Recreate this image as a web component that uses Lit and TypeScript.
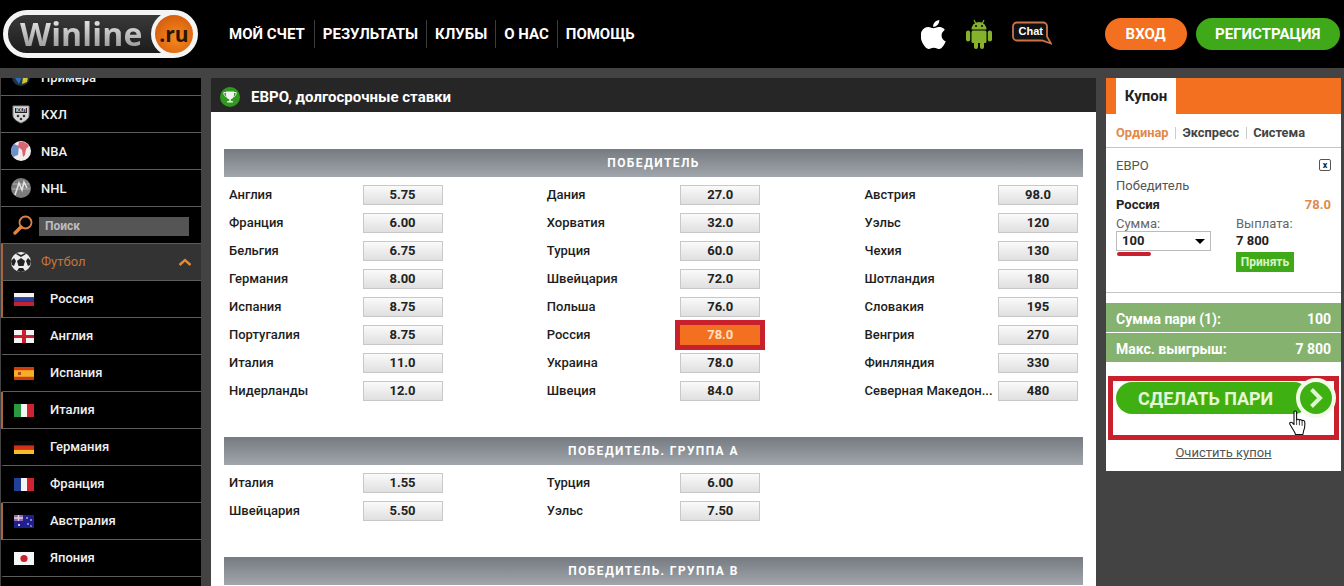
import { LitElement, html, css, svg } from "lit";
import { customElement } from "lit/decorators.js";

const flag: Record<string, any> = {
  ru: svg`<rect width="20" height="4.4" fill="#f4f4f4"/><rect y="4.4" width="20" height="4.3" fill="#2b3c9a"/><rect y="8.7" width="20" height="4.3" fill="#c4222e"/>`,
  en: svg`<rect width="20" height="13" fill="#f4f4f4"/><rect x="8" width="4" height="13" fill="#c8202e"/><rect y="5" width="20" height="3" fill="#c8202e"/>`,
  es: svg`<rect width="20" height="13" fill="#cf3a12"/><rect y="3.2" width="20" height="6.6" fill="#f3b022"/><rect x="4" y="5" width="3" height="3" fill="#b8431a"/>`,
  it: svg`<rect width="7" height="13" fill="#2a9a41"/><rect x="7" width="6" height="13" fill="#f4f4f4"/><rect x="13" width="7" height="13" fill="#d1232f"/>`,
  de: svg`<rect width="20" height="4.4" fill="#0a0a0a"/><rect y="4.4" width="20" height="4.3" fill="#d4301c"/><rect y="8.7" width="20" height="4.3" fill="#f3bd2a"/>`,
  fr: svg`<rect width="7" height="13" fill="#21409a"/><rect x="7" width="6" height="13" fill="#f4f4f4"/><rect x="13" width="7" height="13" fill="#d1232f"/>`,
  au: svg`<rect width="20" height="13" fill="#1f1f8f"/><rect width="9" height="6" fill="#8a6bb0"/><path d="M0 3h9M4.500 0v6" stroke="#e8d0e0" stroke-width="1.400"/><circle cx="5" cy="10" r="1" fill="#fff"/><circle cx="13" cy="3" r=".8" fill="#fff"/><circle cx="17" cy="5" r=".8" fill="#fff"/><circle cx="14" cy="9" r=".8" fill="#fff"/><circle cx="17" cy="11" r=".7" fill="#fff"/>`,
  jp: svg`<rect width="20" height="13" fill="#f6f6f6"/><circle cx="10" cy="6.500" r="3.600" fill="#c8202e"/>`,
};

const sub = [
  ["ru", "Россия", true], ["en", "Англия", false], ["es", "Испания", false], ["it", "Италия", true],
  ["de", "Германия", false], ["fr", "Франция", false], ["au", "Австралия", true], ["jp", "Япония", false],
] as [string, string, boolean][];

const winners: [string, string][] = [
  ["Англия","5.75"],["Дания","27.0"],["Австрия","98.0"],
  ["Франция","6.00"],["Хорватия","32.0"],["Уэльс","120"],
  ["Бельгия","6.75"],["Турция","60.0"],["Чехия","130"],
  ["Германия","8.00"],["Швейцария","72.0"],["Шотландия","180"],
  ["Испания","8.75"],["Польша","76.0"],["Словакия","195"],
  ["Португалия","8.75"],["Россия","78.0"],["Венгрия","270"],
  ["Италия","11.0"],["Украина","78.0"],["Финляндия","330"],
  ["Нидерланды","12.0"],["Швеция","84.0"],["Северная Македон...","480"],
];
const groupA: [string, string][] = [
  ["Италия","1.55"],["Турция","6.00"],["",""],
  ["Швейцария","5.50"],["Уэльс","7.50"],["",""],
];
const groupB: [string, string][] = [];

@customElement("app-root")
export class AppRoot extends LitElement {
  static styles = css`
    :host { display: block; width: 1344px; height: 586px; overflow: hidden; background: #434343; font-family: Roboto, "Liberation Sans", sans-serif; position: relative; }
    .top { height: 68px; background: #000; display: flex; align-items: center; }
    .logo { margin-left: 3px; width: 195px; height: 48px; flex: none; box-sizing: border-box; border: 5px solid #f4f4f4; border-radius: 24px; background: linear-gradient(#3a3a3a, #1c1c1c); position: relative; display: flex; align-items: center; padding-left: 12px; }
    .logo b { font: 700 32px/38px "Open Sans", sans-serif; letter-spacing: .2px; background: linear-gradient(#f2f2f2, #8d8d8d); -webkit-background-clip: text; background-clip: text; color: transparent; }
    .ball { position: absolute; right: -4px; top: -4px; width: 46px; height: 46px; box-sizing: border-box; border-radius: 50%; border: 4px solid #f4f4f4; background: radial-gradient(circle at 55% 60%, #f58a1f, #d9610f 70%, #a84a0a); display: flex; align-items: center; justify-content: center; font: 700 21px "Open Sans", sans-serif; color: #2a1505; }
    nav { margin-left: 31px; display: flex; align-items: center; color: #fff; font-size: 15px; font-weight: 700; height: 28px; }
    nav span { padding: 0 8px; line-height: 28px; border-left: 1px solid #3c3c3c; white-space: nowrap; }
    nav span:first-child { border-left: 0; padding-left: 0; padding-right: 9px; }
    .icons { margin-left: 278px; display: flex; align-items: center; }
    .apple { width: 25px; height: 29px; display: block; }
    .android { width: 26px; height: 30px; display: block; margin-left: 20px; }
    .chat { margin-left: 20px; width: 40px; height: 24px; position: relative; margin-top: -2px; }
    .chat svg { display: block; }
    .chat i { position: absolute; left: 4px; top: 3px; width: 30px; text-align: center; font: 700 11px/15px "Liberation Sans", sans-serif; color: #fff; }
    .pill { height: 32px; border-radius: 16px; color: #fff; font-weight: 700; font-size: 15px; line-height: 32px; text-align: center; }
    .enter { margin-left: 53px; width: 82px; background: #f37021; }
    .reg { margin-left: 9px; width: 144px; background: #3fa91a; }

    .body { display: flex; padding: 10px 0 0 1px; gap: 10px; align-items: flex-start; }
    .side { width: 200px; height: 508px; overflow: hidden; background: #000; flex: none; }
    .list { margin-top: -19px; }
    .row { height: 36px; border-bottom: 1px solid #5c5c5c; display: flex; align-items: center; color: #f0f0f0; font-size: 13px; font-weight: 500; box-sizing: content-box; }
    .row svg.ic { margin-left: 10px; width: 20px; height: 20px; flex: none; }
    .row .t { margin-left: 10px; }
    .row.subr { border-left: 2px solid transparent; }
    .row.subr.mark { border-left-color: #a9653e; }
    .row.subr svg { margin-left: 11px; width: 20px; height: 13px; flex: none; }
    .row.subr .t { margin-left: 16px; margin-top: -2px; }
    .row.search svg.ic { margin-left: 12px; }
    .input { margin-left: 6px; margin-top: 2px; width: 150px; height: 19px; background: #555; color: #bdbdbd; font-size: 12px; font-weight: 700; line-height: 19px; padding-left: 6px; box-sizing: border-box; }
    .row.foot { background: #333; border-left: 2px solid #a9653e; color: #c4743a; font-weight: 400; }
    .row.foot svg.ic { margin-left: 8px; }
    .row.foot .t { margin-top: -2px; }
    .row.foot .chev { margin-left: auto; margin-right: 9px; width: 14px; height: 8px; }

    main { width: 885px; flex: none; background: #fff; height: 508px; overflow: hidden; }
    .mhead { height: 34px; box-sizing: border-box; padding-top: 4px; background: #262626; display: flex; align-items: center; color: #fff; font-weight: 700; font-size: 15px; }
    .mhead svg { margin-left: 9px; margin-right: 11px; }
    .content { padding: 37px 13px 0; }
    .sec { background: linear-gradient(#757b81, #a0a6ab); height: 28px; line-height: 28px; color: #fff; font-size: 12px; font-weight: 700; letter-spacing: 1.4px; text-align: center; }
    .grid { display: grid; grid-template-columns: repeat(3, 317.75px); padding: 4px 0 32px 5px; grid-auto-rows: 28px; width: 954px; }
    .cell { display: flex; align-items: center; color: #1d1d1d; font-size: 13px; font-weight: 500; }
    .cell .n { width: 133.5px; white-space: nowrap; flex: none; margin-top: -2px; }
    .odd { width: 80px; height: 20px; box-sizing: border-box; border: 1px solid #c8c8c8; background: linear-gradient(#fafafa, #dfdfdf); text-align: center; line-height: 18px; font-weight: 700; color: #222; }
    .odd.on { background: #f37021; border-color: #f37021; color: #ffe0c4; outline: 5px solid #c9202e; position: relative; }

    .coupon { width: 235px; flex: none; margin-left: 0; background: #fff; height: 393px; color: #333; font-size: 13px; }
    .tabs { height: 36px; background: #f37021; padding-left: 10px; }
    .tab { width: 60px; height: 36px; background: #fff; color: #222; font-weight: 700; font-size: 15px; line-height: 36px; text-align: center; }
    .modes { height: 33px; box-sizing: content-box; border-bottom: 1px solid #c4c4c4; display: flex; align-items: center; padding-left: 10px; font-size: 12.8px; font-weight: 700; color: #444; white-space: nowrap; }
    .modes span:not(.s) { margin-top: 4px; }
    .modes .o { color: #e08a4c; }
    .modes .s { width: 1px; height: 12px; background: #ccc; margin: 4px 6px 0 7px; }
    .bet { height: 145px; border-bottom: 1px solid #c4c4c4; padding: 7px 10px 0; box-sizing: border-box; position: relative; }
    .line { display: flex; justify-content: space-between; align-items: center; height: 20px; color: #555; }
    .line.b { font-weight: 700; color: #222; height: 19px; }
    .line.b em { font-style: normal; color: #e08a4c; font-size: 13px; }
    .x { width: 10px; height: 10px; border: 1px solid #555; border-radius: 2px; font-size: 9px; line-height: 10px; text-align: center; color: #222; font-weight: 700; margin-right: 0; }
    .stake { display: flex; }
    .stake > div { width: 120px; flex: none; }
    .lbl { color: #666; height: 17px; line-height: 19px; }
    .sel { width: 95px; height: 20px; box-sizing: border-box; border: 1px solid #bbb; font-weight: 700; color: #222; padding-left: 5px; line-height: 18px; display: flex; align-items: center; justify-content: space-between; padding-right: 5px; }
    .sel i { width: 0; height: 0; border: 5px solid transparent; border-top: 5px solid #000; border-bottom: 0; }
    .under { width: 34px; height: 4px; margin: 1px 0 0 1px; border-radius: 2px; background: #c8202e; }
    .pay { font-weight: 700; color: #222; height: 20px; line-height: 20px; font-size: 13px; }
    .ok { display: inline-block; width: 58px; height: 20px; background: #3fa91a; color: #d8f5c8; font-size: 12px; font-weight: 700; line-height: 20px; text-align: center; margin-top: 1px; }
    .tot { margin-top: 10px; }
    .tot div { height: 29px; background: #85b26f; color: #fff; font-weight: 700; font-size: 14px; display: flex; justify-content: space-between; align-items: center; padding: 0 10px; margin-bottom: 1px; }
    .tot span { margin-top: 2px; }
    .red { margin: 14px 2px 0 2px; height: 64px; box-sizing: border-box; border: 5px solid #c9202e; padding: 1px 0 0 3px; position: relative; }
    .go { width: 194px; height: 32px; border-radius: 16px; background: #3fb011; color: #e6f7d8; font-weight: 700; font-size: 18px; line-height: 33px; padding-left: 22px; box-sizing: border-box; }
    .circle { position: absolute; left: 183px; top: -3px; width: 40px; height: 40px; box-sizing: border-box; border-radius: 50%; background: #3fb011; border: 4px solid #f2fbe9; display: flex; align-items: center; justify-content: center; }
    .hand { position: absolute; left: 176px; top: 29px; width: 18px; height: 26px; }
    .clear { text-align: center; margin-top: 5px; color: #555; text-decoration: underline; line-height: 15px; }
  `;

  private grid(items: [string, string][]) {
    return html`<div class="grid">${items.map(([n, o], i) => html`
      <div class="cell">${n ? html`<span class="n">${n}</span><span class="odd ${i === 16 ? "on" : ""}">${o}</span>` : ""}</div>`)}</div>`;
  }

  render() {
    return html`
    <div class="top">
      <div class="logo"><b>Winline</b><span class="ball">.ru</span></div>
      <nav><span>МОЙ СЧЕТ</span><span>РЕЗУЛЬТАТЫ</span><span>КЛУБЫ</span><span>О НАС</span><span>ПОМОЩЬ</span></nav>
      <div class="icons">
        <svg class="apple" viewBox="2.500 0 19.500 24" preserveAspectRatio="none" fill="#fff"><path d="M12.152 6.896c-.948 0-2.415-1.078-3.96-1.04-2.04.027-3.91 1.183-4.961 3.014-2.117 3.675-.546 9.103 1.519 12.09 1.013 1.454 2.208 3.09 3.792 3.039 1.52-.065 2.09-.987 3.935-.987 1.831 0 2.35.987 3.96.948 1.637-.026 2.676-1.48 3.676-2.948 1.156-1.688 1.636-3.325 1.662-3.415-.039-.013-3.182-1.221-3.22-4.857-.026-3.04 2.48-4.494 2.597-4.559-1.429-2.09-3.623-2.324-4.39-2.376-2-.156-3.675 1.09-4.61 1.09zM15.53 3.83c.843-1.012 1.4-2.427 1.245-3.83-1.207.052-2.662.805-3.532 1.818-.78.896-1.454 2.338-1.273 3.714 1.338.104 2.715-.688 3.559-1.701"/></svg>
        <svg class="android" viewBox="0 0 26 30" fill="#86b12c"><path d="M5.500 10.500a7.500 7.500 0 0 1 15 0z"/><path d="M8 1l2 4M18 1l-2 4" stroke="#86b12c" stroke-width="1.200"/><circle cx="10" cy="7" r="1" fill="#000"/><circle cx="16" cy="7" r="1" fill="#000"/><rect x="5.500" y="11.500" width="15" height="12.500" rx="1.500"/><rect x="0" y="11.500" width="4.200" height="11" rx="2.100"/><rect x="21.800" y="11.500" width="4.200" height="11" rx="2.100"/><rect x="8" y="22" width="4" height="8" rx="2"/><rect x="14" y="22" width="4" height="8" rx="2"/></svg>
        <div class="chat"><svg width="40" height="24" viewBox="0 0 40 24"><path d="M5 1.500h26a4 4 0 0 1 4 4v10l4 7-9-3H5a4 4 0 0 1-4-4v-10a4 4 0 0 1 4-4z" fill="#111" stroke="#c9744a" stroke-width="1.800"/></svg><i>Chat</i></div>
      </div>
      <div class="pill enter">ВХОД</div>
      <div class="pill reg">РЕГИСТРАЦИЯ</div>
    </div>
    <div class="body">
      <aside class="side"><div class="list">
        <div class="row"><svg class="ic" viewBox="0 0 20 20"><circle cx="10" cy="10" r="9" fill="#234"/><path d="M2 8l6 9 3-7z" fill="#2a6fb8"/><path d="M12 10l6-4-2 9-5 2z" fill="#d6c62c"/><path d="M7 3l6 0 0 5-5 1z" fill="#eee"/></svg><span class="t">Примера</span></div>
        <div class="row"><svg class="ic" viewBox="0 0 20 20"><path d="M2 2h16v9c0 4-4 6-8 8-4-2-8-4-8-8z" fill="#d8d8d8" stroke="#888"/><rect x="4" y="4" width="12" height="5" fill="#222"/><text x="10" y="8.400" font-size="5" font-family="Liberation Sans" font-weight="700" fill="#eee" text-anchor="middle">КХЛ</text><circle cx="7" cy="12" r="1.300" fill="#333"/><circle cx="13" cy="12" r="1.300" fill="#333"/><circle cx="10" cy="15" r="1.300" fill="#333"/></svg><span class="t">КХЛ</span></div>
        <div class="row"><svg class="ic" viewBox="0 0 20 20"><circle cx="10" cy="10" r="10" fill="#f2eeee"/><path d="M3 3a10 10 0 0 0-1 13l5-2 1-9z" fill="#6f8fc8"/><path d="M8 1q6-1 10 4l-3 3-1 6-2 2-1-7-4-3z" fill="#d8656f"/></svg><span class="t">NBA</span></div>
        <div class="row"><svg class="ic" viewBox="0 0 20 20"><circle cx="10" cy="10" r="10" fill="#7c7c7c"/><path d="M2 6h16M1 11h18" stroke="#b0b0b0" stroke-width="1.200"/><path d="M4 17L8 5l3 7 2-8 3 6" stroke="#e0e0e0" stroke-width="1.600" fill="none"/></svg><span class="t">NHL</span></div>
        <div class="row search"><svg class="ic" viewBox="0 0 20 20" fill="none"><circle cx="12.500" cy="7.500" r="6" stroke="#d9824a" stroke-width="1.800"/><path d="M8 12l-6 6" stroke="#e8843a" stroke-width="3.400" stroke-linecap="round"/></svg><div class="input">Поиск</div></div>
        <div class="row foot"><svg class="ic" viewBox="0 0 20 20"><circle cx="10" cy="10" r="10" fill="#ececec"/><path d="M10 6l4 3-1.500 5h-5L6 9z" fill="#222"/><path d="M6 1l4 2 4-2 1 1-5 3-5-3zM0 9l3-3 2 3-2 5-2-1zM20 9l-3-3-2 3 2 5 2-1zM6 19l2-3h4l2 3-4 1z" fill="#222"/></svg><span class="t">Футбол</span><svg class="chev" viewBox="0 0 14 8" fill="none"><path d="M1.500 7L7 2l5.500 5" stroke="#e08a3a" stroke-width="2.400"/></svg></div>
        ${sub.map(([f, n, m]) => html`<div class="row subr ${m ? "mark" : ""}"><svg viewBox="0 0 20 13">${flag[f]}</svg><span class="t">${n}</span></div>`)}
        <div class="row subr"></div>
      </div></aside>
      <main>
        <div class="mhead"><svg width="20" height="20" viewBox="0 0 20 20"><circle cx="10" cy="10" r="10" fill="#2f9a1e"/><path d="M6 4.500h8v3.500c0 2.500-1.600 3.800-3.200 4.200V14h2v1.500H7.200V14h2v-1.800C7.600 11.800 6 10.500 6 8z" fill="#f2f2f2"/><path d="M6 5.500H3.800c0 2.500 1 3.800 2.700 4.200M14 5.500h2.200c0 2.500-1 3.800-2.700 4.200" stroke="#f2f2f2" fill="none"/></svg>ЕВРО, долгосрочные ставки</div>
        <div class="content">
          <div class="sec">ПОБЕДИТЕЛЬ</div>${this.grid(winners)}
          <div class="sec">ПОБЕДИТЕЛЬ. ГРУППА А</div>${this.grid(groupA)}
          <div class="sec">ПОБЕДИТЕЛЬ. ГРУППА В</div>${this.grid(groupB)}
        </div>
      </main>
      <aside class="coupon">
        <div class="tabs"><div class="tab">Купон</div></div>
        <div class="modes"><span class="o">Ординар</span><span class="s"></span><span>Экспресс</span><span class="s"></span><span>Система</span></div>
        <div class="bet">
          <div class="line"><span>ЕВРО</span><span class="x">x</span></div>
          <div class="line"><span>Победитель</span></div>
          <div class="line b"><span>Россия</span><em>78.0</em></div>
          <div class="stake">
            <div><div class="lbl">Сумма:</div><div class="sel">100<i></i></div><div class="under"></div></div>
            <div><div class="lbl">Выплата:</div><div class="pay">7 800</div><span class="ok">Принять</span></div>
          </div>
        </div>
        <div class="tot"><div><span>Сумма пари (1):</span><span>100</span></div><div><span>Макс. выигрыш:</span><span>7 800</span></div></div>
        <div class="red">
          <div class="go">СДЕЛАТЬ ПАРИ</div>
          <div class="circle"><svg width="16" height="22" viewBox="0 0 16 22" fill="none"><path d="M3.500 2.500L12 11l-8.500 8.500" stroke="#dff5cf" stroke-width="4"/></svg></div>
          <svg class="hand" viewBox="0 0 18 26"><path d="M5 2.200c0-1.600 2.600-1.600 2.600 0V10c.6-1.200 2.600-1 2.800.3.600-1 2.500-.8 2.700.5.800-.8 2.500-.4 2.600 1 .3 3 .2 6-1 8.700l-.8 4H6.500l-1-2.500L1 14.500c-1-1.600.8-3 2.200-1.800L5 14.500z" fill="#fff" stroke="#111" stroke-width="1.100" stroke-linejoin="round"/><path d="M7.600 10v5M10.400 10.300v5M13.100 10.800v5" stroke="#111" stroke-width=".8"/></svg>
        </div>
        <div class="clear">Очистить купон</div>
      </aside>
    </div>`;
  }
}
